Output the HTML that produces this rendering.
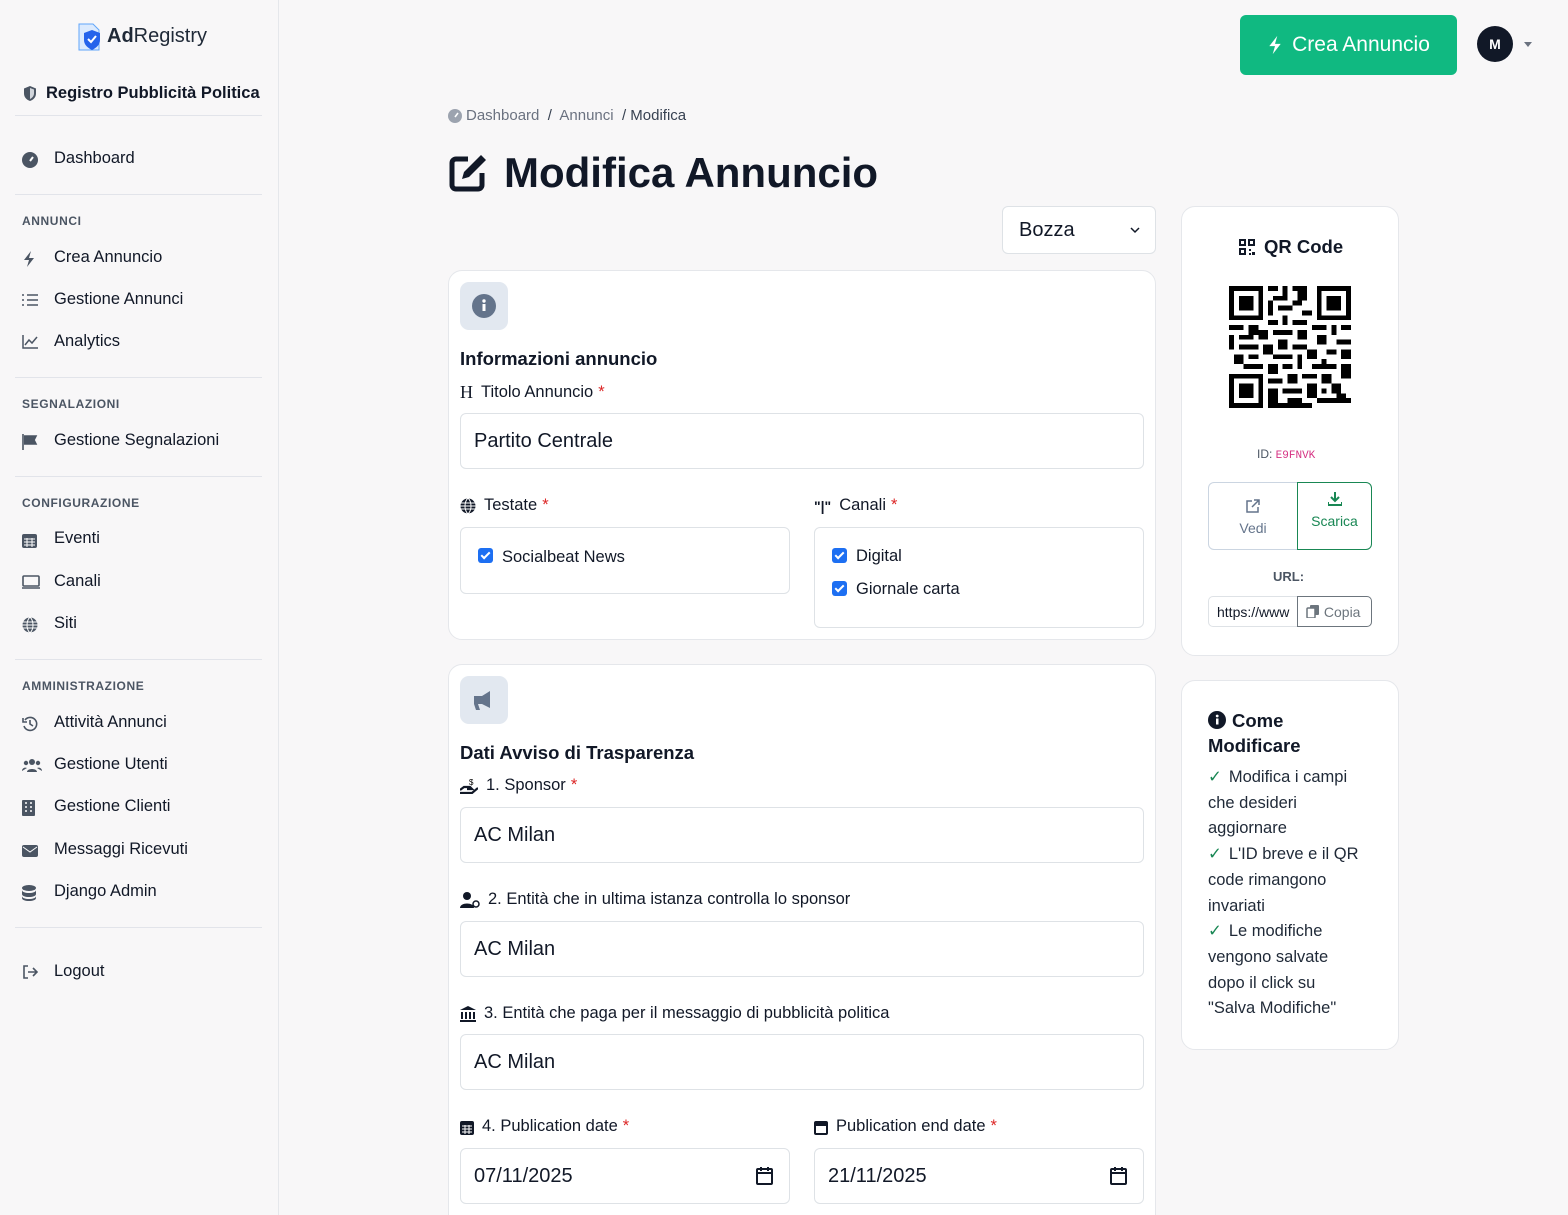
<!DOCTYPE html>
<html style="overflow:hidden;height:1215px"><head><meta charset="utf-8"><style>
*{box-sizing:border-box;margin:0;padding:0}
body{width:1568px;height:1215px;overflow:hidden;background:#f8f7f8;font-family:"Liberation Sans",sans-serif;color:#111827;position:relative}
.a{position:absolute;white-space:nowrap}
.side{position:absolute;left:0;top:0;width:279px;height:1215px;border-right:1px solid #e5e7eb;background:#f8f7f8}
.hr{position:absolute;left:15px;width:247px;height:1px;background:#e2e4ea}
.sec{position:absolute;left:22px;font-size:12px;font-weight:bold;color:#4b5563;letter-spacing:.6px}
.it{position:absolute;left:22px;font-size:16.5px;color:#111827;display:flex;align-items:center}
.it i{display:inline-block;width:16px;height:14px;margin-right:16px;color:#4b5563}
.card{position:absolute;background:#fff;border:1px solid #e5e7eb;border-radius:14px}
.lbl{position:absolute;font-size:16.5px;color:#111827;display:flex;align-items:center}
.lbl svg{margin-right:8px}
.req{color:#dc2626;margin-left:5px}
.inp{position:absolute;border:1px solid #dee2e6;border-radius:6px;background:#fff;font-size:20px;padding-left:13px;display:flex;align-items:center;color:#111827}
.cb{display:inline-block;width:15px;height:15px;background:#1d6ff2;border-radius:3px;margin-right:9px;position:relative;vertical-align:-2px}
.cb:after{content:"";position:absolute;left:5px;top:2px;width:3px;height:7px;border:solid #fff;border-width:0 2px 2px 0;transform:rotate(45deg)}
.ib{position:absolute;width:48px;height:48px;background:#e2e8f0;border-radius:9px}
.h{position:absolute;font-size:18.5px;font-weight:bold;color:#111827}
</style></head><body>
<div class="side">
 <svg class="a" style="left:76px;top:22px" width="30" height="30" viewBox="0 0 30 30"><path d="M3 2h14l6 6v20H3z" fill="#dbeafe" stroke="#60a5fa"/><path d="M8 11l8-3 8 3v7c0 5-4 8-8 10-4-2-8-5-8-10z" fill="#2563eb"/><path d="M12 17l3 3 5-6" stroke="#fff" stroke-width="2" fill="none"/></svg>
 <div class="a" style="left:107px;top:25px;font-size:20px;color:#1f2937"><b>Ad</b>Registry</div>
 <svg class="a" style="left:22px;top:85px" width="16" height="17" viewBox="0 0 16 17"><path d="M8 1l6 2.5v5c0 4-3 6.5-6 7.5-3-1-6-3.5-6-7.5v-5z" fill="#4b5563"/><path d="M8 3v11c2-1 4-3 4-5.5V4.5z" fill="#d1d5db"/></svg>
 <div class="a" style="left:46px;top:84px;font-size:16.5px;font-weight:bold;color:#111827">Registro Pubblicità Politica</div>
 <div class="hr" style="top:115px"></div>
 <div class="it" style="top:149px"><i><svg width="16" height="16"><circle cx="8" cy="8" r="8" fill="#4b5563"/><path d="M8 9l3-4" stroke="#fff" stroke-width="2"/></svg></i>Dashboard</div>
 <div class="hr" style="top:194px"></div>
 <div class="sec" style="top:214px">ANNUNCI</div>
 <div class="it" style="top:248px"><i><svg width="14" height="16"><path d="M9 0L2 9h5l-2 7 7-9H7z" fill="#4b5563"/></svg></i>Crea Annuncio</div>
 <div class="it" style="top:290px"><i><svg width="16" height="14"><path d="M0 2h2M0 7h2M0 12h2M5 2h11M5 7h11M5 12h11" stroke="#4b5563" stroke-width="1.6"/></svg></i>Gestione Annunci</div>
 <div class="it" style="top:332px"><i><svg width="16" height="14"><path d="M1 0v13h15M3 10l4-5 3 3 5-6" stroke="#4b5563" stroke-width="1.5" fill="none"/></svg></i>Analytics</div>
 <div class="hr" style="top:377px"></div>
 <div class="sec" style="top:397px">SEGNALAZIONI</div>
 <div class="it" style="top:431px"><i><svg width="16" height="16"><path d="M1 0v16M2 2h12l-2 4 2 4H2" fill="#4b5563" stroke="#4b5563" stroke-width="1.6"/></svg></i>Gestione Segnalazioni</div>
 <div class="hr" style="top:476px"></div>
 <div class="sec" style="top:496px">CONFIGURAZIONE</div>
 <div class="it" style="top:529px"><i><svg width="15" height="16"><rect x="0" y="2" width="15" height="14" rx="2" fill="#4b5563"/><path d="M2 7h11M2 10h11M2 13h11M5 6v9M10 6v9" stroke="#fff"/></svg></i>Eventi</div>
 <div class="it" style="top:572px"><i><svg width="18" height="14"><rect x="1" y="1" width="16" height="10" rx="1" stroke="#4b5563" stroke-width="1.6" fill="none"/><path d="M0 13h18" stroke="#4b5563" stroke-width="1.6"/></svg></i>Canali</div>
 <div class="it" style="top:614px"><i><svg width="16" height="16"><circle cx="8" cy="8" r="7.5" fill="#4b5563"/><path d="M0 8h16M8 0c-4 4-4 12 0 16M8 0c4 4 4 12 0 16M1 5h14M1 11h14" stroke="#fff" fill="none"/></svg></i>Siti</div>
 <div class="hr" style="top:659px"></div>
 <div class="sec" style="top:679px">AMMINISTRAZIONE</div>
 <div class="it" style="top:713px"><i><svg width="16" height="16"><path d="M3 4a6.5 6.5 0 1 1-1 6M1 2v4h4M8 4v4l3 2" stroke="#4b5563" stroke-width="1.6" fill="none"/></svg></i>Attività Annunci</div>
 <div class="it" style="top:755px"><i><svg width="20" height="14"><circle cx="10" cy="4" r="3" fill="#4b5563"/><circle cx="4" cy="5" r="2.2" fill="#4b5563"/><circle cx="16" cy="5" r="2.2" fill="#4b5563"/><path d="M5 14c0-4 10-4 10 0zM0 13c0-3 3-4 5-3M20 13c0-3-3-4-5-3" fill="#4b5563"/></svg></i>Gestione Utenti</div>
 <div class="it" style="top:797px"><i><svg width="13" height="16"><rect width="13" height="16" rx="1" fill="#4b5563"/><path d="M3 3h2M8 3h2M3 7h2M8 7h2M3 11h2M8 11h2" stroke="#fff" stroke-width="1.6"/></svg></i>Gestione Clienti</div>
 <div class="it" style="top:840px"><i><svg width="16" height="13"><rect y="1" width="16" height="12" rx="2" fill="#4b5563"/><path d="M1 3l7 5 7-5" stroke="#fff" fill="none"/></svg></i>Messaggi Ricevuti</div>
 <div class="it" style="top:882px"><i><svg width="14" height="16"><ellipse cx="7" cy="3" rx="7" ry="3" fill="#4b5563"/><path d="M0 5c0 4 14 4 14 0v4c0 4-14 4-14 0zM0 11c0 4 14 4 14 0v2c0 4-14 4-14 0z" fill="#4b5563"/></svg></i>Django Admin</div>
 <div class="hr" style="top:927px"></div>
 <div class="it" style="top:962px"><i><svg width="16" height="14"><path d="M6 1H2v12h4M6 7h9M11 3l4 4-4 4" stroke="#4b5563" stroke-width="1.6" fill="none"/></svg></i>Logout</div>
</div>

<div class="a" style="left:1240px;top:15px;width:217px;height:60px;background:#10b981;border-radius:6px;color:#fff;font-size:21px;display:flex;align-items:center;justify-content:center"><svg width="16" height="20" viewBox="0 0 14 16" style="margin-right:9px"><path d="M9 0L2 9h5l-2 7 7-9H7z" fill="#fff"/></svg>Crea Annuncio</div>
<div class="a" style="left:1477px;top:26px;width:36px;height:36px;border-radius:50%;background:#111827;color:#fff;font-size:14px;font-weight:bold;display:flex;align-items:center;justify-content:center">M</div>
<div class="a" style="left:1524px;top:42px;border:4px solid transparent;border-top:5px solid #6b7280;border-bottom:0"></div>

<div class="a" style="left:448px;top:107px;font-size:15px;color:#6b7280;display:flex;align-items:center"><svg width="14" height="14" style="margin-right:4px"><circle cx="7" cy="7" r="7" fill="#9ca3af"/><path d="M7 8l3-4" stroke="#fff" stroke-width="1.6"/></svg>Dashboard &nbsp;<span style="color:#374151">/</span>&nbsp; Annunci &nbsp;<span style="color:#374151">/</span>&nbsp; <span style="color:#374151">Modifica</span></div>
<svg class="a" style="left:448px;top:153px" width="40" height="40" viewBox="0 0 40 40"><path d="M20 6H8a4 4 0 0 0-4 4v22a4 4 0 0 0 4 4h22a4 4 0 0 0 4-4V20" stroke="#111827" stroke-width="5" fill="none"/><path d="M33 2l5 5-17 17-7 2 2-7z" fill="#111827"/></svg>
<div class="a" style="left:504px;top:149px;font-size:42px;font-weight:bold;color:#111827">Modifica Annuncio</div>

<div class="a" style="left:1002px;top:206px;width:154px;height:48px;background:#fff;border:1px solid #dee2e6;border-radius:6px;font-size:20px;padding-left:16px;display:flex;align-items:center">Bozza<svg style="position:absolute;right:15px;top:20px" width="10" height="7"><path d="M1 1l4 4 4-4" stroke="#111827" stroke-width="1.5" fill="none"/></svg></div>

<div class="card" style="left:448px;top:270px;width:708px;height:370px"></div>
<div class="ib" style="left:460px;top:282px"><svg style="margin:12px" width="24" height="24"><circle cx="12" cy="12" r="12" fill="#64748b"/><rect x="10.5" y="10" width="3" height="7" fill="#fff"/><circle cx="12" cy="7" r="1.7" fill="#fff"/></svg></div>
<div class="h" style="left:460px;top:348px">Informazioni annuncio</div>
<div class="lbl" style="left:460px;top:382px"><span style="font-family:'Liberation Serif';font-size:18px;margin-right:8px">H</span>Titolo Annuncio<span class="req">*</span></div>
<div class="inp" style="left:460px;top:413px;width:684px;height:56px">Partito Centrale</div>
<div class="lbl" style="left:460px;top:496px"><svg width="16" height="16"><circle cx="8" cy="8" r="7.5" fill="#111827"/><path d="M0 8h16M8 0c-4 4-4 12 0 16M8 0c4 4 4 12 0 16M1 5h14M1 11h14" stroke="#fff" fill="none"/></svg>Testate<span class="req">*</span></div>
<div class="lbl" style="left:814px;top:496px"><span style="font-size:14px;font-weight:bold;margin-right:8px">"|"</span>Canali<span class="req">*</span></div>
<div class="inp" style="left:460px;top:527px;width:330px;height:67px;font-size:16.5px;align-items:flex-start;padding-top:20px;padding-left:17px"><span class="cb"></span>Socialbeat News</div>
<div class="inp" style="left:814px;top:527px;width:330px;height:101px;font-size:16.5px;display:block;padding-top:20px;padding-left:17px;line-height:16px"><div><span class="cb"></span>Digital</div><div style="margin-top:17px"><span class="cb"></span>Giornale carta</div></div>

<div class="card" style="left:448px;top:664px;width:708px;height:600px"></div>
<div class="ib" style="left:460px;top:676px"><svg style="margin:12px" width="24" height="24" viewBox="0 0 24 24"><path d="M18 3v17l-8-4H6l2 6H4l-2-6V8h8z" fill="#64748b"/></svg></div>
<div class="h" style="left:460px;top:742px">Dati Avviso di Trasparenza</div>
<div class="lbl" style="left:460px;top:776px"><svg width="18" height="16"><path d="M0 12l4-3h6l2 2H7M0 15h12l6-5" stroke="#111827" stroke-width="2.2" fill="none"/><text x="9" y="7" font-size="8" font-family="Liberation Sans">$</text></svg>1. Sponsor<span class="req">*</span></div>
<div class="inp" style="left:460px;top:807px;width:684px;height:56px">AC Milan</div>
<div class="lbl" style="left:460px;top:890px"><svg width="20" height="16"><circle cx="7" cy="4" r="4" fill="#111827"/><path d="M0 16c0-6 14-6 14 0z" fill="#111827"/><circle cx="16" cy="12" r="3" stroke="#111827" stroke-width="1.5" fill="none"/></svg>2. Entità che in ultima istanza controlla lo sponsor</div>
<div class="inp" style="left:460px;top:921px;width:684px;height:56px">AC Milan</div>
<div class="lbl" style="left:460px;top:1004px"><svg width="16" height="16"><path d="M8 0l8 4H0z" fill="#111827"/><path d="M2 6v7M6 6v7M10 6v7M14 6v7M0 15h16" stroke="#111827" stroke-width="2"/></svg>3. Entità che paga per il messaggio di pubblicità politica</div>
<div class="inp" style="left:460px;top:1034px;width:684px;height:56px">AC Milan</div>
<div class="lbl" style="left:460px;top:1117px"><svg width="14" height="16"><rect y="2" width="14" height="14" rx="2" fill="#111827"/><path d="M2 7h10M2 10h10M2 13h10M5 6v9M9 6v9" stroke="#fff"/></svg>4. Publication date<span class="req">*</span></div>
<div class="lbl" style="left:814px;top:1117px"><svg width="14" height="16"><rect y="2" width="14" height="14" rx="2" fill="#111827"/><rect x="2" y="7" width="10" height="7" fill="#fff"/></svg>Publication end date<span class="req">*</span></div>
<div class="inp" style="left:460px;top:1148px;width:330px;height:56px">07/11/2025<svg style="position:absolute;right:16px;top:18px" width="17" height="18"><rect x="1" y="2" width="15" height="15" rx="1" stroke="#111827" stroke-width="2" fill="none"/><path d="M1 6h15M5 0v4M12 0v4" stroke="#111827" stroke-width="2"/></svg></div>
<div class="inp" style="left:814px;top:1148px;width:330px;height:56px">21/11/2025<svg style="position:absolute;right:16px;top:18px" width="17" height="18"><rect x="1" y="2" width="15" height="15" rx="1" stroke="#111827" stroke-width="2" fill="none"/><path d="M1 6h15M5 0v4M12 0v4" stroke="#111827" stroke-width="2"/></svg></div>

<div class="card" style="left:1181px;top:206px;width:218px;height:450px"></div>
<div class="a" style="left:1239px;top:236px;font-size:18.5px;font-weight:bold;display:flex;align-items:center"><svg width="16" height="16" style="margin-right:9px"><rect x="1" y="1" width="5" height="5" stroke="#111827" stroke-width="2" fill="none"/><rect x="10" y="1" width="5" height="5" stroke="#111827" stroke-width="2" fill="none"/><rect x="1" y="10" width="5" height="5" stroke="#111827" stroke-width="2" fill="none"/><path d="M10 10h2v2h-2zM13 13h3v3h-3zM10 14h2v2h-2z" fill="#111827"/></svg>QR Code</div>
<svg class="a" style="left:1229px;top:286px" width="122" height="122" viewBox="0 0 25 25" shape-rendering="crispEdges"><rect width="25" height="25" fill="#fff"/><g fill="#000">
<path d="M0 0h7v7H0zM18 0h7v7h-7zM0 18h7v7H0z"/></g><g fill="#fff"><path d="M1 1h5v5H1zM19 1h5v5h-5zM1 19h5v5H1z"/></g><g fill="#000"><path d="M2 2h3v3H2zM20 2h3v3h-3zM2 20h3v3H2z"/>
<path d="M8 0h2v1H8zM11 0h1v2h-1zM13 0h3v1h-3zM9 2h3v1H9zM14 1h2v2h-2zM8 3h1v3H8zM10 4h3v1h-3zM13 3h2v1h-2zM15 5h2v1h-2zM11 6h1v2h-1zM8 7h2v1H8zM13 7h3v1h-3z"/>
<path d="M0 8h3v1H0zM4 8h2v2H4zM0 10h1v3H0zM2 10h3v1H2zM6 9h2v2H6zM9 9h4v1H9zM14 9h2v2h-2zM17 8h3v1h-3zM21 8h1v2h-1zM23 8h2v1h-2zM18 10h2v2h-2zM22 11h3v1h-3zM10 11h2v2h-2zM13 12h3v1h-3zM2 12h4v1H2zM7 12h2v2H7zM1 14h2v2H1zM4 14h2v1H4zM9 14h4v1H9zM14 14h1v3h-1zM16 13h2v2h-2zM20 13h2v1h-2zM23 13h2v2h-2zM3 16h4v1H3zM8 16h2v2H8zM11 16h2v1h-2zM17 16h5v1h-5zM23 16h2v3h-2zM19 15h1v1h-1z"/>
<path d="M8 19h3v1H8zM12 18h2v2h-2zM15 18h3v1h-3zM19 18h2v2h-2zM8 21h2v3H8zM11 21h4v1h-4zM16 20h2v3h-2zM19 21h1v1h-1zM21 20h2v2h-2zM12 23h3v2h-3zM18 23h7v1h-7zM8 24h4v1H8zM15 24h2v1h-2zM22 22h2v1h-2z"/></g></svg>
<div class="a" style="left:1257px;top:447px;font-size:12px;color:#4b5563">ID: <span style="color:#d63384;font-family:'Liberation Mono';font-size:11px">E9FNVK</span></div>
<div class="a" style="left:1208px;top:482px;width:90px;height:68px;border:1px solid #cbd5e1;border-radius:6px 0 0 6px;text-align:center;color:#64748b;font-size:14px;padding-top:15px;line-height:20px"><svg width="14" height="14"><path d="M6 2H1v11h11V8M8 1h5v5M13 1L6 8" stroke="#64748b" stroke-width="1.5" fill="none"/></svg><br>Vedi</div>
<div class="a" style="left:1297px;top:482px;width:75px;height:68px;border:1px solid #198754;border-radius:0 6px 6px 0;text-align:center;color:#198754;font-size:14px;padding-top:8px;line-height:20px"><svg width="14" height="14"><path d="M7 0v8M3 5l4 4 4-4M0 10v3h14v-3" stroke="#198754" stroke-width="2" fill="none"/></svg><br>Scarica</div>
<div class="a" style="left:1273px;top:569px;font-size:13px;font-weight:bold;color:#4b5563">URL:</div>
<div class="a" style="left:1208px;top:596px;width:90px;height:31px;border:1px solid #dee2e6;border-radius:5px 0 0 5px;font-size:14px;padding:7px 0 0 8px;overflow:hidden;background:#fff">https://www</div>
<div class="a" style="left:1297px;top:596px;width:75px;height:31px;border:1px solid #6c757d;border-radius:0 5px 5px 0;font-size:14px;color:#6c757d;padding:7px 0 0 8px"><svg width="14" height="13" style="vertical-align:-1px"><rect x="4" y="0" width="9" height="10" rx="1" fill="#6c757d"/><rect x="1" y="3" width="8" height="10" rx="1" fill="#fff" stroke="#6c757d" stroke-width="1.5"/></svg> Copia</div>

<div class="card" style="left:1181px;top:680px;width:218px;height:370px"></div>
<div class="a" style="left:1208px;top:708px;font-size:18.5px;font-weight:bold;line-height:25px;white-space:normal;width:160px"><svg width="18" height="18" style="vertical-align:-2px;margin-right:6px"><circle cx="9" cy="9" r="9" fill="#111827"/><rect x="8" y="7.5" width="2.5" height="6" fill="#fff"/><circle cx="9.2" cy="5" r="1.4" fill="#fff"/></svg>Come<br>Modificare</div>
<div class="a" style="left:1208px;top:765px;width:155px;font-size:16.5px;line-height:25.7px;white-space:normal;color:#1f2937">
<div><span style="color:#198754;margin-right:7px">✓</span>Modifica i campi che desideri aggiornare</div>
<div><span style="color:#198754;margin-right:7px">✓</span>L'ID breve e il QR code rimangono invariati</div>
<div><span style="color:#198754;margin-right:7px">✓</span>Le modifiche vengono salvate dopo il click su "Salva Modifiche"</div>
</div>
</body></html>
